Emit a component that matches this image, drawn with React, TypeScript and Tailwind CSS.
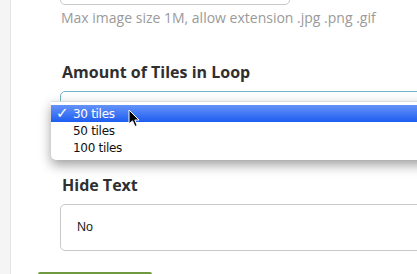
import React from "react";

export default function App() {
  return (
    <div className="relative flex h-[274px] w-[417px] overflow-hidden bg-white" style={{ fontFamily: '"Open Sans", sans-serif' }}>
      <div className="w-[11px] shrink-0 border-r border-[#e4e4e4] bg-[#f5f5f5]" />
      <div className="flex flex-1 flex-col">
        <div className="pl-[49px]">
          <div className="-mt-[30px] h-[35px] w-[230px] rounded-[5px] border border-[#c8c8c8] bg-white" />
          <p className="mt-[4px] pl-[1px] text-[14px] leading-[18px] text-[#9a9a9a]">
            Max image size 1M, allow extension .jpg .png .gif
          </p>
          <h3 className="mt-[34px] pl-[2px] text-[16px] font-bold leading-[22px] text-[#2f2f2f]">
            Amount of Tiles in Loop
          </h3>
          <div className="mt-[8px] h-[47px] w-[400px] rounded-[5px] border border-[#72b5c6] bg-white" />
          <h3 className="mt-[36px] pl-[2px] text-[16px] font-bold leading-[22px] text-[#2f2f2f]">
            Hide Text
          </h3>
          <div className="mt-[8px] flex h-[47px] w-[400px] items-center rounded-[5px] border border-[#c9c9c9] bg-white pl-[16px]">
            <span className="text-[12.5px] text-[#222]" style={{ fontFamily: '"Liberation Sans", Arial, sans-serif' }}>
              No
            </span>
          </div>
        </div>
        <div className="ml-[27px] mt-[21px] h-[20px] w-[114px] rounded-t-[3px] bg-[#6f9a3f]" />
      </div>

      <div
        className="absolute left-[51px] top-[101px] w-[400px] rounded-b-[5px] border-t border-[#dedede] bg-white pb-[4px] pt-[3px] shadow-[0_5px_12px_rgba(0,0,0,0.38)]"
        style={{ fontFamily: '"DejaVu Sans", sans-serif' }}
      >
        <div className="flex h-[17px] items-center bg-gradient-to-b from-[#6592f8] to-[#1b5cf1] text-white">
          <span className="w-[22px] pl-[5px] text-[15px] font-bold leading-none">✓</span>
          <span className="text-[12px] leading-none tracking-[-0.3px]">30 tiles</span>
        </div>
        <div className="flex h-[17px] items-center text-[#111]">
          <span className="w-[22px]" />
          <span className="text-[12px] leading-none tracking-[-0.3px]">50 tiles</span>
        </div>
        <div className="flex h-[17px] items-center text-[#111]">
          <span className="w-[22px]" />
          <span className="text-[12px] leading-none tracking-[-0.3px]">100 tiles</span>
        </div>
      </div>

      <svg className="absolute left-[128px] top-[109px]" width="12" height="19" viewBox="0 0 12 19">
        <path d="M1 1 L1 15 L4.5 11.8 L7 17.5 L9.2 16.5 L6.8 11 L11 11 Z" fill="#000" stroke="#fff" strokeWidth="1" strokeLinejoin="round" />
      </svg>
    </div>
  );
}
